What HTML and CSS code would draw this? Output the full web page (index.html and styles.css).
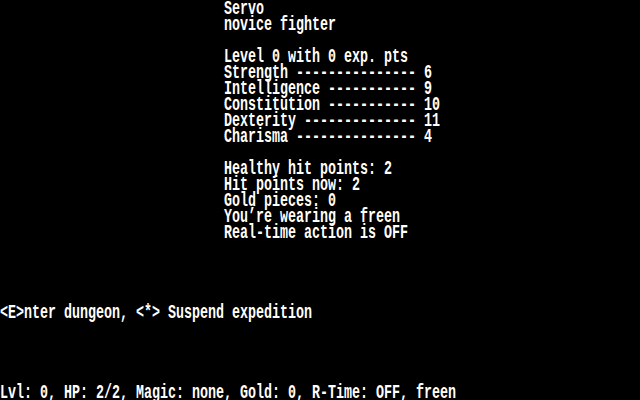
FILE: index.html
```html
<!DOCTYPE html>
<html>
<head>
<meta charset="utf-8">
<link rel="stylesheet" href="styles.css">
</head>
<body>
<div class="screen">
  <div class="sheet">
    <div class="ln">Servo</div>
    <div class="ln">novice fighter</div>
    <div class="ln"></div>
    <div class="ln">Level 0 with 0 exp. pts</div>
    <div class="ln">Strength --------------- 6</div>
    <div class="ln">Intelligence ----------- 9</div>
    <div class="ln">Constitution ----------- 10</div>
    <div class="ln">Dexterity -------------- 11</div>
    <div class="ln">Charisma --------------- 4</div>
    <div class="ln"></div>
    <div class="ln">Healthy hit points: 2</div>
    <div class="ln">Hit points now: 2</div>
    <div class="ln">Gold pieces: 0</div>
    <div class="ln">You’re wearing a freen</div>
    <div class="ln">Real-time action is OFF</div>
  </div>
  <div class="gap"></div>
  <div class="ln">&lt;E&gt;nter dungeon, &lt;*&gt; Suspend expedition</div>
  <div class="gap"></div>
  <div class="ln">Lvl: 0, HP: 2/2, Magic: none, Gold: 0, R-Time: OFF, freen</div>
</div>
</body>
</html>
```
FILE: styles.css
```css
html, body {
  margin: 0;
  padding: 0;
  background: #000;
  width: 640px;
  height: 400px;
  overflow: hidden;
}
.screen {
  width: 960px;
  height: 400px;
  padding-top: 1px;
  box-sizing: border-box;
  transform: scaleX(0.6666667);
  transform-origin: 0 0;
  color: #fff;
  font-family: "Liberation Mono", monospace;
  font-weight: bold;
  font-size: 20px;
  display: flex;
  flex-direction: column;
}
.sheet {
  padding-left: 336px;
  flex: none;
}
.ln {
  height: 16px;
  line-height: 16px;
  white-space: pre;
  flex: none;
}
.gap {
  height: 64px;
  flex: none;
}
```
